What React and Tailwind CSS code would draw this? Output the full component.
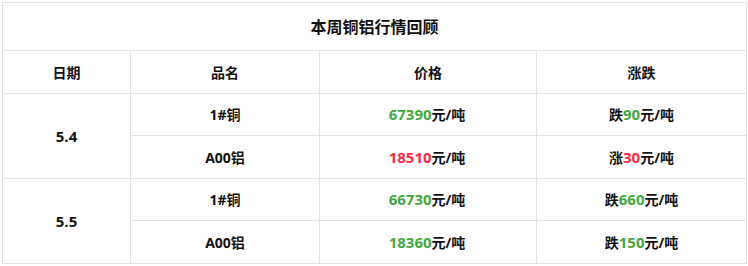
import React from 'react';

const rows = [
  { date: '5.4', items: [
    { name: '1#铜', price: '67390', up: false, change: '90' },
    { name: 'A00铝', price: '18510', up: true, change: '30' },
  ] },
  { date: '5.5', items: [
    { name: '1#铜', price: '66730', up: false, change: '660' },
    { name: 'A00铝', price: '18360', up: false, change: '150' },
  ] },
];

export default function App() {
  const cell = 'border border-[#e3e3e3] text-center';
  return (
    <div
      className="bg-white w-[748px] h-[266px] pt-[2px] pl-[2px] text-[#111] font-bold"
      style={{ fontFamily: '"Open Sans", "Noto Sans CJK SC", sans-serif' }}
    >
      <table className="border-collapse w-[744px] table-fixed text-[14px]">
        <colgroup>
          <col className="w-[128px]" />
          <col className="w-[189px]" />
          <col className="w-[217px]" />
          <col className="w-[210px]" />
        </colgroup>
        <thead>
          <tr className="h-[48px]">
            <th colSpan={4} className={`${cell} text-[16px]`}>本周铜铝行情回顾</th>
          </tr>
          <tr className="h-[43px]">
            <th className={cell}>日期</th>
            <th className={cell}>品名</th>
            <th className={cell}>价格</th>
            <th className={cell}>涨跌</th>
          </tr>
        </thead>
        <tbody>
          {rows.map((group) =>
            group.items.map((item, i) => (
              <tr key={group.date + i} className={i === 0 ? 'h-[42px]' : 'h-[43px]'}>
                {i === 0 && (
                  <td rowSpan={2} className={`${cell} text-[15px]`}>{group.date}</td>
                )}
                <td className={cell}>{item.name}</td>
                <td className={`${cell} pr-[2px]`}>
                  <span className={`text-[15px] ${item.up ? 'text-[#ff2941]' : 'text-[#43a843]'}`}>{item.price}</span>元/吨
                </td>
                <td className={cell}>
                  {item.up ? '涨' : '跌'}
                  <span className={`text-[15px] ${item.up ? 'text-[#ff2941]' : 'text-[#43a843]'}`}>{item.change}</span>元/吨
                </td>
              </tr>
            ))
          )}
        </tbody>
      </table>
    </div>
  );
}
